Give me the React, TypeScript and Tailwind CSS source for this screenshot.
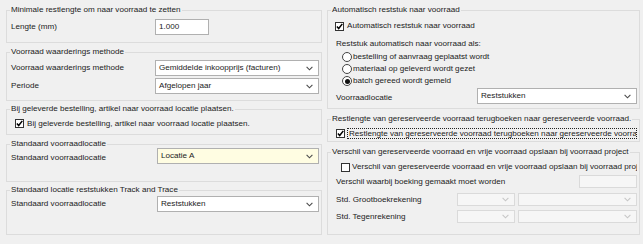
import React from 'react';

// --- small controls ---
const Chevron = ({ disabled }: { disabled?: boolean }) => (
  <svg width="7" height="5" viewBox="0 0 7 5" className="shrink-0">
    <polyline points="0.6,0.9 3.5,3.8 6.4,0.9" fill="none" stroke={disabled ? '#c6c6c6' : '#4a4a4a'} strokeWidth="1.1" />
  </svg>
);

const Select: React.FC<{ value?: string; className?: string; yellow?: boolean; disabled?: boolean }> = ({ value, className = '', yellow, disabled }) => (
  <div
    className={`flex items-center justify-between h-[16px] border pl-[3px] pr-[5px] ${
      disabled ? 'border-[#dadada] bg-[#f6f6f6]' : yellow ? 'border-[#b0b0b0] bg-[#fffde2]' : 'border-[#b0b0b0] bg-white'
    } ${className}`}
  >
    <span className="whitespace-nowrap">{value}</span>
    <Chevron disabled={disabled} />
  </div>
);

const CheckBox = ({ checked }: { checked?: boolean }) => (
  <span className="flex items-center justify-center w-[9px] h-[9px] border border-[#333] bg-white shrink-0">
    {checked && (
      <svg width="7" height="7" viewBox="0 0 7 7">
        <path d="M0.9 3.5 L2.7 5.5 L6.3 0.9" fill="none" stroke="#000" strokeWidth="1.5" />
      </svg>
    )}
  </span>
);

const Radio = ({ checked }: { checked?: boolean }) => (
  <span className="flex items-center justify-center w-[10px] h-[10px] rounded-full border border-[#444] bg-white shrink-0">
    {checked && <span className="w-[5px] h-[5px] rounded-full bg-[#111]" />}
  </span>
);

const Group: React.FC<{ title: string; className?: string; children: React.ReactNode }> = ({ title, className = '', children }) => (
  <fieldset className={`border border-[#dcdcdc] px-[2px] min-w-0 ${className}`}>
    <legend className="ml-[1px] px-[1px] leading-[12px]">{title}</legend>
    {children}
  </fieldset>
);

const radios = [
  { label: 'bestelling of aanvraag geplaatst wordt', on: false },
  { label: 'materiaal op geleverd wordt gezet', on: false },
  { label: 'batch gereed wordt gemeld', on: true },
];

export default function App() {
  return (
    <div className="w-[643px] h-[244px] bg-[#f0f0f0] text-[#1b1b1b] text-[8.1px] leading-[12px] font-['Liberation_Sans',Arial,sans-serif] flex gap-[5px] pl-[6px] pt-[4px]">
      {/* -- left column -- */}
      <div className="w-[316px] flex flex-col">
        <Group title="Minimale restlengte om naar voorraad te zetten" className="pb-[7px]">
          <div className="flex items-center mt-[3px] h-[16px]">
            <span className="w-[146px] pl-[2px]">Lengte (mm)</span>
            <div className="w-[54px] h-[16px] border border-[#b0b0b0] bg-white pl-[3px] flex items-center">1.000</div>
          </div>
        </Group>

        <Group title="Voorraad waarderings methode" className="mt-[3px] pb-[6px]">
          <div className="flex items-center mt-[2px]">
            <span className="w-[146px] pl-[2px]">Voorraad waarderings methode</span>
            <Select value="Gemiddelde inkoopprijs (facturen)" className="flex-1" />
          </div>
          <div className="flex items-center mt-[2px]">
            <span className="w-[146px] pl-[2px]">Periode</span>
            <Select value="Afgelopen  jaar" className="flex-1" />
          </div>
        </Group>

        <Group title="Bij geleverde bestelling, artikel naar voorraad locatie plaatsen." className="mt-[2px] pb-[5px]">
          <div className="flex items-center gap-[3px] mt-[3px] h-[11px] pl-[6px]">
            <CheckBox checked />
            <span className="whitespace-nowrap">Bij geleverde bestelling, artikel naar voorraad locatie plaatsen.</span>
          </div>
        </Group>

        <Group title="Standaard voorraadlocatie" className="mt-[3px] pb-[17px]">
          <div className="flex items-center -mt-[2px]">
            <span className="w-[148px] pl-[2px] pt-[3px]">Standaard voorraadlocatie</span>
            <Select value="Locatie A" yellow className="flex-1" />
          </div>
        </Group>

        <Group title="Standaard locatie reststukken Track and Trace" className="mt-[2px] pb-[22px]">
          <div className="flex items-center">
            <span className="w-[148px] pl-[2px]">Standaard voorraadlocatie</span>
            <Select value="Reststukken" className="flex-1" />
          </div>
        </Group>
      </div>

      {/* -- right column -- */}
      <div className="w-[313px] flex flex-col">
        <Group title="Automatisch reststuk naar voorraad" className="pb-[4px]">
          <div className="flex items-center gap-[3px] mt-[5px] h-[10px] pl-[5px]">
            <CheckBox checked />
            <span>Automatisch reststuk naar voorraad</span>
          </div>
          <div className="mt-[7px] pl-[6px]">Reststuk automatisch naar voorraad als:</div>
          <div className="mt-[1px] flex flex-col">
            {radios.map(r => (
              <div key={r.label} className="flex items-center h-[12px]">
                <span className="w-3 shrink-0" />
                <Radio checked={r.on} />
                <span className="ml-[1px]">{r.label}</span>
              </div>
            ))}
          </div>
          <div className="flex items-center mt-[1px]">
            <span className="w-[147px] pl-[6px] pt-[3px]">Voorraadlocatie</span>
            <Select value="Reststukken" className="flex-1" />
          </div>
        </Group>

        <Group title="Restlengte van gereserveerde voorraad terugboeken naar gereserveerde voorraad." className="mt-[4px] pb-[2px]">
          <div className="flex items-center gap-[2px] mt-[3px] h-[11px] pl-[6px]">
            <CheckBox checked />
            <span className="flex-1 min-w-0 overflow-hidden whitespace-nowrap border border-dotted border-[#222] h-[11px] leading-[9px] pl-[1px]">
              Restlengte van gereserveerde voorraad terugboeken naar gereserveerde voorraad.
            </span>
          </div>
        </Group>

        <Group title="Verschil van gereserveerde voorraad en vrije voorraad opslaan bij voorraad project" className="mt-[4px] pb-[11px]">
          <div className="flex items-center gap-[2px] mt-[3px] h-[12px] pl-[11px]">
            <CheckBox />
            <span className="flex-1 min-w-0 overflow-hidden whitespace-nowrap">
              Verschil van gereserveerde voorraad en vrije voorraad opslaan bij voorraad project
            </span>
          </div>
          <div className="flex items-center justify-between mt-[2px] h-[13px]">
            <span className="pl-[6px]">Verschil waarbij boeking gemaakt moet worden</span>
            <div className="w-[58px] h-[13px] border border-[#dadada] bg-[#f6f6f6]" />
          </div>
          <div className="flex items-center mt-[5px] h-[13px]">
            <span className="w-[127px] pl-[6px]">Std. Grootboekrekening</span>
            <Select disabled className="w-[58px] !h-[13px]" />
            <Select disabled className="flex-1 ml-[3px] !h-[13px]" />
          </div>
          <div className="flex items-center mt-[4px] h-[13px]">
            <span className="w-[127px] pl-[6px]">Std. Tegenrekening</span>
            <Select disabled className="w-[58px] !h-[13px]" />
            <Select disabled className="flex-1 ml-[3px] !h-[13px]" />
          </div>
        </Group>
      </div>
    </div>
  );
}
